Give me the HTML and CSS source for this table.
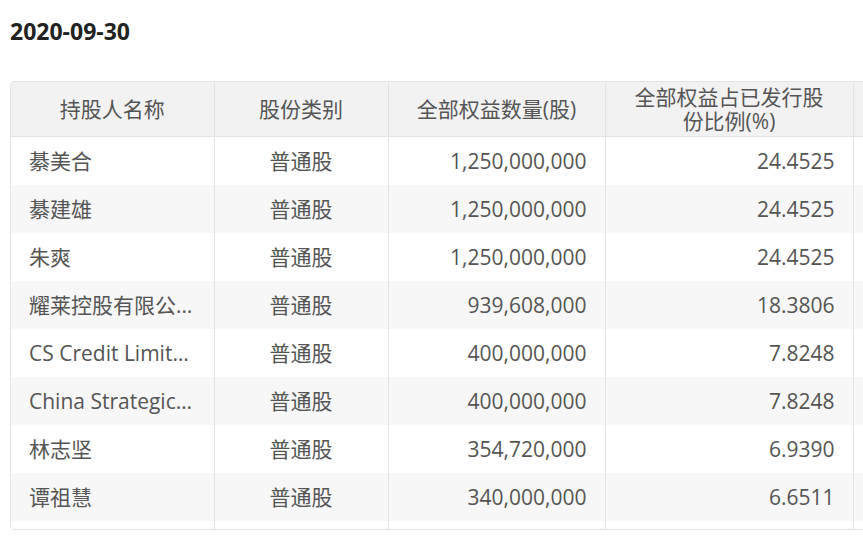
FILE: index.html
```html
<!DOCTYPE html>
<html lang="zh-CN">
<head>
<meta charset="utf-8">
<title>股东</title>
<link rel="stylesheet" href="styles.css">
</head>
<body>
<div class="page">
  <h2 class="date">2020-09-30</h2>
  <div class="tbl-wrap">
    <table class="holders">
      <colgroup>
        <col class="c1"><col class="c2"><col class="c3"><col class="c4"><col class="c5">
      </colgroup>
      <thead>
        <tr>
          <th>持股人名称</th>
          <th>股份类别</th>
          <th>全部权益数量(股)</th>
          <th>全部权益占已发行股份比例(%)</th>
          <th></th>
        </tr>
      </thead>
      <tbody>
        <tr><td class="name">綦美合</td><td class="ctr">普通股</td><td class="num">1,250,000,000</td><td class="num">24.4525</td><td></td></tr>
        <tr><td class="name">綦建雄</td><td class="ctr">普通股</td><td class="num">1,250,000,000</td><td class="num">24.4525</td><td></td></tr>
        <tr><td class="name">朱爽</td><td class="ctr">普通股</td><td class="num">1,250,000,000</td><td class="num">24.4525</td><td></td></tr>
        <tr><td class="name">耀莱控股有限公司</td><td class="ctr">普通股</td><td class="num">939,608,000</td><td class="num">18.3806</td><td></td></tr>
        <tr><td class="name">CS Credit Limited</td><td class="ctr">普通股</td><td class="num">400,000,000</td><td class="num">7.8248</td><td></td></tr>
        <tr><td class="name">China Strategic Holdings</td><td class="ctr">普通股</td><td class="num">400,000,000</td><td class="num">7.8248</td><td></td></tr>
        <tr><td class="name">林志坚</td><td class="ctr">普通股</td><td class="num">354,720,000</td><td class="num">6.9390</td><td></td></tr>
        <tr><td class="name">谭祖慧</td><td class="ctr">普通股</td><td class="num">340,000,000</td><td class="num">6.6511</td><td></td></tr>
        <tr class="spacer"><td></td><td></td><td></td><td></td><td></td></tr>
      </tbody>
    </table>
  </div>
</div>
</body>
</html>
```

FILE: styles.css
```css
html, body {
  margin: 0;
  padding: 0;
  background: #fff;
  overflow: hidden;
}
.page {
  padding: 16px 0 0 10px;
  font-family: "Open Sans", "Noto Sans CJK SC", sans-serif;
  color: #555;
}
.date {
  margin: 0;
  font-size: 23px;
  line-height: 30px;
  font-weight: 700;
  color: #222;
}
.tbl-wrap {
  margin-top: 35px;
  width: 1000px;
  border: 1px solid #e3e3e3;
  border-radius: 4px;
  overflow: hidden;
}
.holders {
  border-collapse: collapse;
  table-layout: fixed;
  width: 1000px;
  font-size: 21px;
}
.c1 { width: 203px; }
.c2 { width: 174px; }
.c3 { width: 217px; }
.c4 { width: 248px; }
.c5 { width: 158px; }
.holders th {
  height: 54px;
  padding: 0 20px;
  background: #f2f2f2;
  font-weight: 400;
  line-height: 24px;
  text-align: center;
  border-right: 1px solid #e3e3e3;
  border-bottom: 1px solid #e3e3e3;
  color: #555;
}
.holders td {
  height: 48px;
  padding: 0 19px 0 19px;
  line-height: 24px;
  border-right: 1px solid #e3e3e3;
  white-space: nowrap;
  overflow: hidden;
  text-overflow: ellipsis;
  box-sizing: border-box;
}
.holders tbody tr:nth-child(even) td {
  background: #f7f7f7;
}
.holders td.name { text-align: left; padding-left: 18px; padding-right: 20px; }
.holders td.ctr { text-align: center; }
.holders td.num { text-align: right; padding-right: 18px; }
.holders tr.spacer td {
  height: 8px;
  background: #fff;
}
```
